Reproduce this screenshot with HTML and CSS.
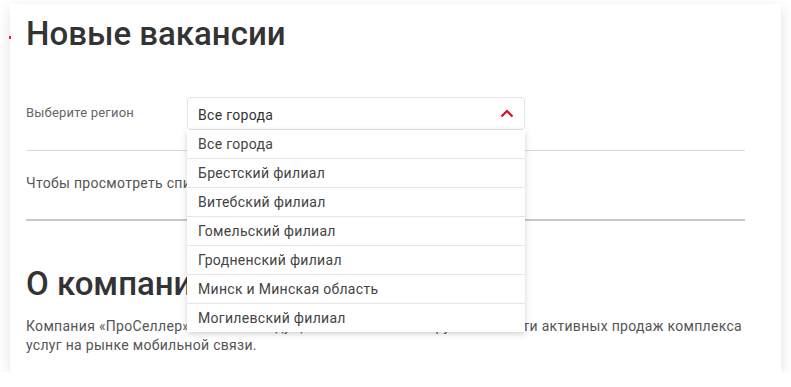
FILE: index.html
```html
<!DOCTYPE html>
<html lang="ru">
<head>
    <meta charset="UTF-8">
    <meta name="viewport" content="width=device-width, initial-scale=1.0">
    <title>Вакансии</title>
    <link rel="stylesheet" href="styles.css">
</head>
<body>
    <div class="card">
        <span class="mark"></span>
        <h1 class="title">Новые вакансии</h1>

        <div class="region">
            <label class="region-label" for="region">Выберите регион</label>
            <div class="select">
                <div class="select-value" id="region">
                    Все города
                    <svg class="chevron" width="14" height="9" viewBox="0 0 14 9">
                        <path d="M1.5 7.5 L7 2 L12.5 7.5" fill="none" stroke="#e30613" stroke-width="2"/>
                    </svg>
                </div>
                <ul class="options">
                    <li>Все города</li>
                    <li>Брестский филиал</li>
                    <li>Витебский филиал</li>
                    <li>Гомельский филиал</li>
                    <li>Гродненский филиал</li>
                    <li>Минск и Минская область</li>
                    <li>Могилевский филиал</li>
                </ul>
            </div>
        </div>

        <div class="hint">Чтобы просмотреть список вакансий, выберите регион из списка.</div>

        <h2 class="title">О компании</h2>
        <p class="about">Компания «ПроСеллер» является ведущей компанией Беларуси в области активных продаж комплекса услуг на рынке мобильной связи.</p>
    </div>
</body>
</html>
```

FILE: styles.css
```css
body {
    margin: 0;
    background-color: #fff;
    font-family: Roboto, 'Noto Sans', sans-serif;
    color: #333;
}

.card {
    position: relative;
    width: 771px;
    box-sizing: border-box;
    margin: 4px 0 0 10px;
    padding: 9px 36px 17px 16px;
    background-color: #fff;
    box-shadow: 0 4px 12px rgba(0, 0, 0, 0.12);
}

.mark {
    position: absolute;
    left: -1px;
    top: 32px;
    width: 2px;
    height: 3px;
    background-color: #ff1a2a;
}

.title {
    margin: 0;
    font-size: 33px;
    line-height: 42px;
    font-weight: 500;
    color: #333;
}

h2.title {
    margin-top: 42px;
}

.region {
    display: flex;
    align-items: center;
    margin-top: 42px;
    padding-bottom: 20px;
    border-bottom: 1px solid #d9d9d9;
}

.region-label {
    width: 161px;
    font-size: 13px;
    color: #666;
    letter-spacing: 0.2px;
    margin-top: -2px;
}

.select {
    position: relative;
    width: 338px;
}

.select-value {
    display: flex;
    align-items: center;
    justify-content: space-between;
    box-sizing: border-box;
    height: 33px;
    padding: 3px 10px 0 10px;
    border: 1px solid #e3e3e3;
    border-radius: 4px;
    font-size: 14px;
    letter-spacing: 0.3px;
    color: #333;
}

.chevron {
    margin-right: 0;
    margin-top: -4px;
}

.options {
    position: absolute;
    top: 33px;
    left: 0;
    width: 100%;
    margin: 0;
    padding: 0;
    list-style: none;
    background-color: #fff;
    box-shadow: 0 2px 6px rgba(0, 0, 0, 0.18);
    z-index: 2;
}

.options li {
    height: 28px;
    line-height: 28px;
    padding: 0 11px;
    font-size: 14px;
    letter-spacing: 0.3px;
    color: #444;
    border-bottom: 1px solid #e6e6e6;
}

.options li:last-child {
    border-bottom: none;
}

.hint {
    padding: 22px 0 26px;
    font-size: 14px;
    line-height: 20px;
    letter-spacing: 0.3px;
    color: #555;
    border-bottom: 2px solid #c8c8c8;
}

.about {
    margin: 12px 0 0;
    font-size: 14px;
    line-height: 19px;
    letter-spacing: 0.3px;
    color: #555;
}
```
